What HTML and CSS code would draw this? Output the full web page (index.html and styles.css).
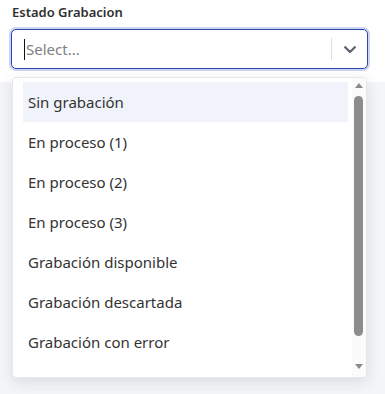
FILE: index.html
```html
<!DOCTYPE html>
<html lang="es">
<head>
    <meta charset="UTF-8">
    <meta name="viewport" content="width=device-width, initial-scale=1.0">
    <title>Estado Grabacion</title>
    <link rel="stylesheet" href="styles.css">
</head>
<body>

    <div class="field">
        <label class="field-label">Estado Grabacion</label>

        <div class="select-control">
            <div class="select-box">
                <div class="select-value">
                    <span class="caret"></span>
                    <span class="placeholder">Select...</span>
                </div>
                <span class="separator"></span>
                <div class="indicator">
                    <svg width="12" height="8" viewBox="0 0 12 8">
                        <polyline points="1.2,1.2 6,6 10.8,1.2" fill="none" stroke="#5f6673" stroke-width="2.3" stroke-linecap="round" stroke-linejoin="round"/>
                    </svg>
                </div>
            </div>

            <!-- menu desplegable -->
            <div class="select-menu">
                <div class="options">
                    <div class="option focused">Sin grabación</div>
                    <div class="option">En proceso (1)</div>
                    <div class="option">En proceso (2)</div>
                    <div class="option">En proceso (3)</div>
                    <div class="option">Grabación disponible</div>
                    <div class="option">Grabación descartada</div>
                    <div class="option">Grabación con error</div>
                    <div class="option">Grabación borrada</div>
                </div>
                <div class="scrollbar">
                    <span class="arrow-up"></span>
                    <span class="thumb"></span>
                    <span class="arrow-down"></span>
                </div>
            </div>
        </div>
    </div>

    <div class="backdrop"></div>

</body>
</html>
```

FILE: styles.css
```css
* {
    margin: 0;
    padding: 0;
    box-sizing: border-box;
}

body {
    font-family: 'Noto Sans', 'Open Sans', sans-serif;
    background: #fff;
    color: #333;
    overflow: hidden;
}

.field {
    padding: 3px 17px 0 11px;
}

.field-label {
    display: block;
    font-size: 13px;
    font-weight: 600;
    line-height: 18px;
    color: #2f2f2f;
    padding-left: 1px;
}

.select-control {
    position: relative;
    margin-top: 8px;
}

.select-box {
    display: flex;
    align-items: center;
    height: 40px;
    border: 1px solid #2c47ad;
    border-radius: 5px;
    box-shadow: 0 0 0 2px #cdd5f1;
    background: #fff;
}

.select-value {
    flex: 1;
    display: flex;
    align-items: center;
    padding-left: 12px;
}

.caret {
    width: 1px;
    height: 21px;
    background: #111;
    margin-right: 1px;
}

.placeholder {
    font-size: 15px;
    color: #808080;
}

.separator {
    width: 1px;
    height: 22px;
    background: #dedede;
}

.indicator {
    width: 35px;
    display: flex;
    justify-content: center;
    align-items: center;
    padding-top: 1px;
}

/* menu */
.select-menu {
    position: absolute;
    top: calc(100% + 8px);
    left: 1px;
    right: 1px;
    height: 301px;
    display: flex;
    background: #fff;
    border: 1px solid #e4e7ee;
    border-radius: 4px;
    box-shadow: 0 4px 14px rgba(30, 40, 70, 0.12);
    overflow: hidden;
    z-index: 2;
}

.options {
    flex: 1;
    overflow: hidden;
    padding: 4px 4px 0 10px;
}

.option {
    height: 40px;
    line-height: 40px;
    padding-left: 5px;
    font-size: 15px;
    color: #333;
    white-space: nowrap;
}

.option.focused {
    background: #f0f3f9;
}

.scrollbar {
    width: 14px;
    display: flex;
    flex-direction: column;
    align-items: center;
    background: #fbfbfb;
    padding: 5px 1px 0 0;
}

.arrow-up,
.arrow-down {
    width: 0;
    height: 0;
    border-left: 4px solid transparent;
    border-right: 4px solid transparent;
}

.arrow-up {
    border-bottom: 5px solid #8a8a8a;
}

.thumb {
    width: 9px;
    height: 240px;
    margin-top: 8px;
    background: #8c8c8c;
    border-radius: 5px;
}

.arrow-down {
    border-top: 5px solid #8a8a8a;
    margin-top: 28px;
}

.backdrop {
    margin-top: 13px;
    height: 320px;
    background: #f4f5f8;
}
```
